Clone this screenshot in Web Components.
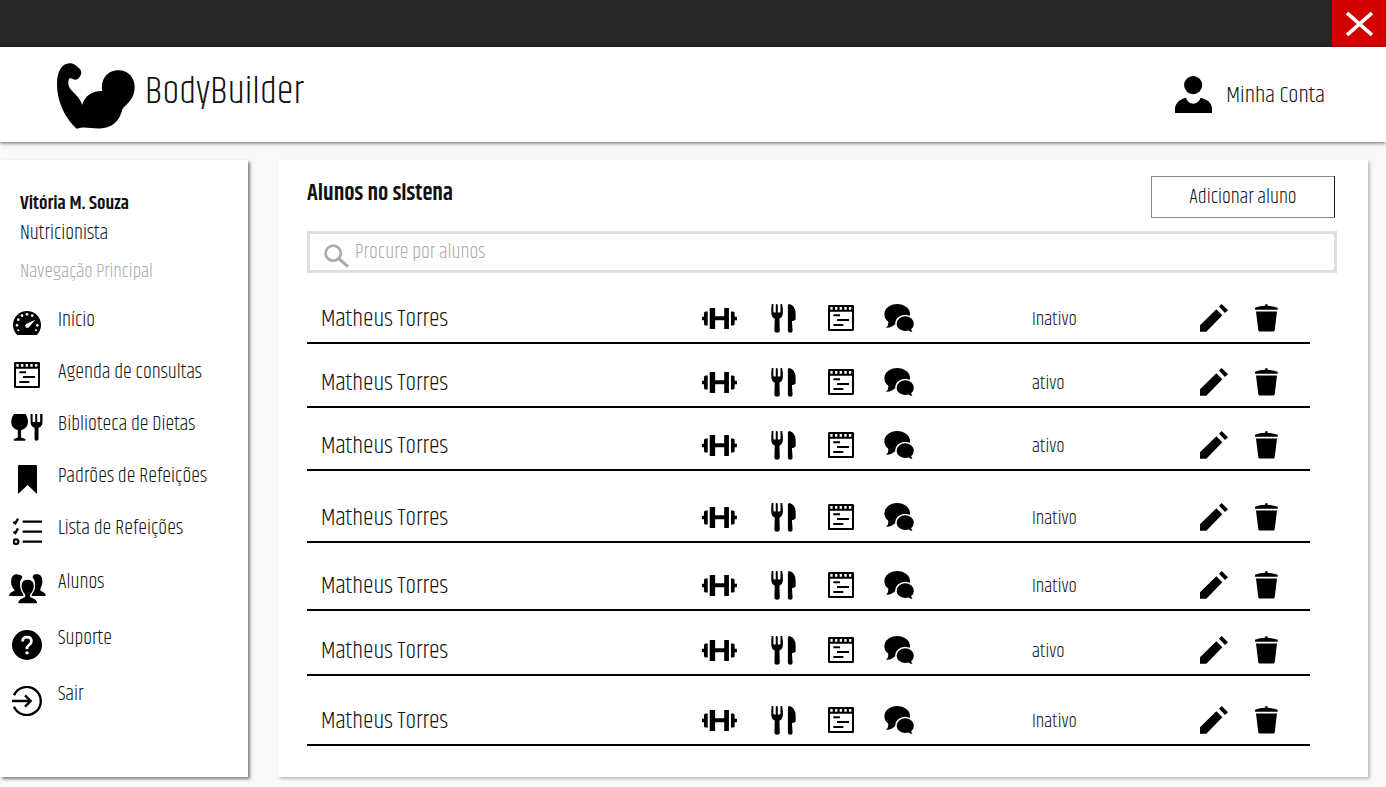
<!DOCTYPE html>
<html lang="pt-BR">
<head>
<meta charset="utf-8">
<meta name="viewport" content="width=device-width, initial-scale=1">
<title>BodyBuilder</title>
<style>
  html { background: #f9f9f9; }
  body {
    margin: 0;
    color: #111;
    font-family: Khand, "Liberation Sans Narrow", "Open Sans Condensed", "Roboto Condensed", "Liberation Sans", sans-serif;
    font-size: 20px;
    font-weight: 300;
    line-height: 24px;
  }
</style>
</head>
<body>
<body-builder-app></body-builder-app>

<script>
const ICONS = {
  close: [27, 24, '0 0 81 72', '<path d="M3 3 78 69M78 3 3 69" fill="none" stroke="currentColor" stroke-width="11"/>'],
  arm: [78, 66, '0 0 236 198', '<path d="M60 198C38 180 0 130 0 62C0 25 15 0 38 0C50 0 55 6 60 9C70 17 76 24 73 32C70 42 64 50 56 50C48 50 44 43 37 46C30 60 36 75 48 86C60 98 72 110 76 126C84 100 105 83 137 84C132 50 150 21 186 21C215 21 235 42 235 72C235 105 215 120 198 138C190 175 165 196 130 197C105 198 90 192 72 195Z"/>'],
  person: [37, 37, '0 0 110 110', '<circle cx="54" cy="27" r="27"/><path d="M0 110V96C2 78 18 68 33 65C38 88 70 88 76 65C95 70 108 78 110 96V110Z"/>'],
  search: [25, 24, '0 0 76 71', '<g fill="none" stroke="currentColor" stroke-width="8"><circle cx="28" cy="27" r="23"/><path d="M46 44 73 68" stroke-width="9"/></g>'],
  dumbbell: [35, 21, '0 0 104 62', '<path d="M0 26H6V15Q6 10 11 10H17V52H11Q6 52 6 47V36H0ZM23 0H39V24H66V0H80V62H66V36H39V62H23ZM86 10H92Q97 10 97 15V26H104V36H97V47Q97 52 92 52H86Z"/>'],
  cutlery: [25, 29, '0 0 74 86', '<path d="M2 0H7V22Q7 25 10 25H14V3Q14 0 17 0T20 3V25H25Q28 25 28 22V0H33Q36 12 35 30Q34 40 25 44L26 80Q26 85 18 85T10 80L11 44Q2 40 1 30Q0 12 2 0ZM50 5Q50 0 55 0Q73 6 73 28V44Q73 50 62 51L64 79Q64 85 57 85T50 79Z"/>'],
  calendar: [26, 26, '0 0 78 78', '<path fill-rule="evenodd" d="M4 0H74Q78 0 78 4V74Q78 78 74 78H4Q0 78 0 74V4Q0 0 4 0ZM6 20V72H72V20ZM7 6V14H14V6ZM21 6V14H28V6ZM35 6V14H42V6ZM49 6V14H56V6ZM63 6V14H70V6Z"/><path d="M16 31H36M27 45H63M16 60H46" fill="none" stroke="currentColor" stroke-width="6"/>'],
  chat: [31, 29, '0 0 92 88', '<ellipse cx="39" cy="31" rx="39" ry="31"/><path d="M12 48Q14 66 5 72Q22 74 36 58Z"/><path d="M63 35C79 35 92 46 92 60C92 67 89 73 84 77Q86 84 92 87Q82 89 73 83C51 88 35 75 35 60C35 46 48 35 63 35Z" stroke="#fff" stroke-width="5"/>'],
  pencil: [28, 28, '0 0 84 84', '<path d="M0 64 49 16 67 34 19 83H0ZM57 8 65 0 84 19 75 27Z"/>'],
  trash: [23, 28, '0 0 70 84', '<path d="M0 17V11Q14 5 31 5V0H38V5Q56 5 69 11V17ZM3 22H67L60 79Q59 83 56 83H14Q11 83 10 79Z"/>'],
  gauge: [28, 24, '0 0 84 72', '<path d="M13 72C5 65 0 54 0 42C0 18 19 0 42 0S84 18 84 42C84 54 79 65 71 72Z"/><g fill="#fff"><circle cx="12" cy="43" r="4"/><circle cx="16" cy="26" r="4"/><circle cx="27" cy="14" r="4"/><circle cx="42" cy="10" r="4"/><circle cx="58" cy="14" r="4"/><circle cx="73" cy="43" r="4"/><circle cx="16" cy="58" r="3"/><circle cx="69" cy="58" r="3"/><path d="M67 26 49 47Q45 52 39 50Q34 44 39 39Z"/></g>'],
  diet: [32, 27, '0 0 96 82', '<path d="M8 0H44C54 18 56 42 30 49V71L43 76V81H8V76L20 71V49C-4 42-4 18 8 0ZM59 0H65V24H73V0H79V24H88V0H95V25Q95 38 83 42V76Q83 81 77 81T71 76V42Q59 38 59 25Z"/>'],
  bookmark: [19, 29, '0 0 57 87', '<path d="M4 0H53Q57 0 57 4V87L29 60 0 87V4Q0 0 4 0Z"/>'],
  list: [29, 27, '0 0 87 81', '<g fill="none" stroke="currentColor" stroke-width="7"><path d="M29 11H87M29 41H87M29 71H87"/><path d="M1 12 7 16 15 2M1 41 7 45 15 31"/><circle cx="9" cy="71" r="7"/></g>'],
  people: [37, 30, '0 0 110 90', '<path d="M0 66C0 57 6 54 16 50C18 46 4 42 6 20C7 2 22-2 30 3C36 2 40 6 39 12C31 20 31 31 37 45L43 57V66ZM110 66C110 57 102 54 94 50C92 46 96 40 99 30C102 8 94-2 78 1C72 2 70 6 71 12C79 20 79 31 73 45L67 57V66Z"/><path d="M25 90C25 75 36 73 46 68V62C38 54 32 38 37 26C42 12 68 12 74 26C79 38 73 54 65 62V68C75 73 86 75 86 90Z" stroke="#fff" stroke-width="4"/>'],
  help: [30, 30, '0 0 88 88', '<circle cx="44" cy="44" r="44"/><path d="M31 34Q31 21 44 21T57 33Q57 39 50 44T44 56" fill="none" stroke="#fff" stroke-width="8"/><circle cx="44" cy="67" r="5" fill="#fff"/>'],
  exit: [30, 30, '0 0 90 90', '<g fill="none" stroke="currentColor" stroke-width="7"><path d="M6 28A42 42 0 1 1 6 62M0 45H56M39 28 56 45 39 62"/></g>']
};

class UiIcon extends HTMLElement {
  connectedCallback() {
    const [w, h, box, art] = ICONS[this.getAttribute('name')];
    this.attachShadow({ mode: 'open' }).innerHTML = `
      <style>:host { display: inline-flex; flex: none; } svg { display: block; fill: currentColor; }</style>
      <svg width="${w}" height="${h}" viewBox="${box}" aria-hidden="true">${art}</svg>`;
  }
}
customElements.define('ui-icon', UiIcon);

class TitleBar extends HTMLElement {
  constructor() {
    super();
    this.attachShadow({ mode: 'open' }).innerHTML = `
      <style>
        :host { display: flex; justify-content: flex-end; height: 47px; background: #272727; }
        button { display: grid; place-items: center; width: 54px; padding: 0; border: 0; background: #d20000; color: #fff; }
      </style>
      <button type="button" aria-label="Fechar"><ui-icon name="close"></ui-icon></button>`;
  }
}
customElements.define('title-bar', TitleBar);

class SiteHeader extends HTMLElement {
  constructor() {
    super();
    this.attachShadow({ mode: 'open' }).innerHTML = `
      <style>
        :host { display: block; position: relative; background: #fff; box-shadow: 0 1px 4px rgba(0,0,0,.6); }
        header { display: flex; align-items: center; justify-content: space-between; height: 93px; padding: 2px 61px 0 57px; }
        a { display: flex; align-items: center; color: inherit; text-decoration: none; }
        .brand { gap: 10px; font-size: 38px; line-height: 48px; }
        .brand span { margin-bottom: 8px; }
        .account { gap: 14px; font-size: 23px; line-height: 32px; }
        .account ui-icon { margin-bottom: 3px; }
        ui-icon { color: #000; }
      </style>
      <header>
        <a class="brand" href="#"><ui-icon name="arm"></ui-icon><span>BodyBuilder</span></a>
        <a class="account" href="#"><ui-icon name="person"></ui-icon><span>Minha Conta</span></a>
      </header>`;
  }
}
customElements.define('site-header', SiteHeader);

class NavItem extends HTMLElement {
  constructor() {
    super();
    this.attachShadow({ mode: 'open' }).innerHTML = `
      <style>
        :host { display: block; --row: 52px; --drop: 4px; }
        :host([tall]) { --row: 56px; --drop: 12px; }
        a { display: flex; align-items: center; gap: 13px; height: var(--row); color: inherit; text-decoration: none; }
        .icon { display: grid; place-items: center; width: 36px; margin-top: var(--drop); color: #000; }
      </style>
      <a href="#"><span class="icon"><ui-icon name="${this.getAttribute('icon')}"></ui-icon></span><slot></slot></a>`;
  }
}
customElements.define('nav-item', NavItem);

class SideBar extends HTMLElement {
  constructor() {
    super();
    this.attachShadow({ mode: 'open' }).innerHTML = `
      <style>
        :host { display: block; box-sizing: border-box; width: 248px; padding: 29px 0 31px; background: #fff; box-shadow: 2px 2px 3px rgba(0,0,0,.5); }
        p { margin: 0 20px; line-height: 30px; }
        .name { font-size: 19px; font-weight: 600; }
        .caption { font-size: 19px; line-height: 46px; color: #aaa; }
        nav { padding-left: 9px; }
      </style>
      <p class="name"><slot name="name"></slot></p>
      <p><slot name="role"></slot></p>
      <p class="caption">Navegação Principal</p>
      <nav aria-label="Navegação Principal"><slot></slot></nav>`;
  }
}
customElements.define('side-bar', SideBar);

class SearchBox extends HTMLElement {
  constructor() {
    super();
    this.attachShadow({ mode: 'open' }).innerHTML = `
      <style>
        :host { display: block; }
        label { display: flex; align-items: center; gap: 6px; height: 36px; padding-left: 14px; border: 3px solid #dfdfdf; }
        ui-icon { margin-top: 8px; color: #aaa; }
        input { flex: 1; min-width: 0; height: 36px; padding: 0; margin: 0; border: 0; outline: 0; background: none; font: inherit; color: inherit; }
        input::placeholder { color: #aaa; opacity: 1; }
      </style>
      <label><ui-icon name="search"></ui-icon><input type="search" placeholder="Procure por alunos" aria-label="Procure por alunos"></label>`;
  }
}
customElements.define('search-box', SearchBox);

class StudentTable extends HTMLElement {
  connectedCallback() {
    const actions = [['dumbbell', 'Treinos'], ['cutlery', 'Dieta'], ['calendar', 'Agenda'], ['chat', 'Mensagens']];
    const edits = [['pencil', 'Editar'], ['trash', 'Excluir']];
    const cell = ([icon, label]) => `<td><button type="button" aria-label="${label}"><ui-icon name="${icon}"></ui-icon></button></td>`;
    const students = [
      ['Matheus Torres', 'Inativo', 71], ['Matheus Torres', 'ativo', 64], ['Matheus Torres', 'ativo', 63],
      ['Matheus Torres', 'Inativo', 72], ['Matheus Torres', 'Inativo', 68], ['Matheus Torres', 'ativo', 65],
      ['Matheus Torres', 'Inativo', 70]
    ];
    this.attachShadow({ mode: 'open' }).innerHTML = `
      <style>
        :host { display: block; }
        table { width: 100%; table-layout: fixed; border-collapse: separate; border-spacing: 0; }
        th, td { height: var(--row); box-sizing: border-box; padding: 0 0 6px; border-bottom: 2px solid #000; vertical-align: bottom; text-align: left; font-weight: 300; line-height: 36px; }
        th { padding: 0 0 5px 14px; font-size: 24px; }
        .status { padding-bottom: 4px; font-size: 19px; }
        button { display: grid; place-items: center; width: 36px; height: 36px; padding: 0; border: 0; background: none; color: #000; }
      </style>
      <table aria-label="Alunos">
        <colgroup><col><col style="width:64px"><col style="width:58px"><col style="width:58px"><col style="width:151px"><col style="width:164px"><col style="width:52px"><col style="width:62px"></colgroup>
        <tbody>${students.map(([name, status, row]) => `
          <tr style="--row:${row}px"><th scope="row">${name}</th>${actions.map(cell).join('')}<td class="status">${status}</td>${edits.map(cell).join('')}</tr>`).join('')}
        </tbody>
      </table>`;
  }
}
customElements.define('student-table', StudentTable);

class StudentPanel extends HTMLElement {
  constructor() {
    super();
    this.attachShadow({ mode: 'open' }).innerHTML = `
      <style>
        :host { display: block; padding: 16px 31px 31px 29px; background: #fff; box-shadow: 2px 2px 3px rgba(0,0,0,.25); }
        .head { display: flex; justify-content: space-between; align-items: flex-start; margin: 0 2px 13px 0; }
        h1 { margin: 0; font-size: 23px; line-height: 36px; font-weight: 600; }
        button { width: 184px; height: 42px; padding: 2px 0 0; border: 1px solid #888; border-right-color: #161616; background: #fff; color: inherit; font: inherit; }
        student-table { margin-right: 27px; }
      </style>
      <div class="head"><h1><slot></slot></h1><button type="button">Adicionar aluno</button></div>
      <search-box></search-box>
      <student-table></student-table>`;
  }
}
customElements.define('student-panel', StudentPanel);

class BodyBuilderApp extends HTMLElement {
  constructor() {
    super();
    this.attachShadow({ mode: 'open' }).innerHTML = `
      <style>
        :host { display: block; }
        main { display: flex; gap: 30px; padding: 18px 18px 10px 0; }
        side-bar { flex: none; }
        student-panel { flex: 1; min-width: 0; }
      </style>
      <title-bar></title-bar>
      <site-header></site-header>
      <main>
        <side-bar>
          <span slot="name">Vitória M. Souza</span>
          <span slot="role">Nutricionista</span>
          <nav-item icon="gauge">Início</nav-item>
          <nav-item icon="calendar">Agenda de consultas</nav-item>
          <nav-item icon="diet">Biblioteca de Dietas</nav-item>
          <nav-item icon="bookmark">Padrões de Refeições</nav-item>
          <nav-item icon="list">Lista de Refeições</nav-item>
          <nav-item icon="people" tall>Alunos</nav-item>
          <nav-item icon="help" tall>Suporte</nav-item>
          <nav-item icon="exit" tall>Sair</nav-item>
        </side-bar>
        <student-panel>Alunos no sistena</student-panel>
      </main>`;
  }
}
customElements.define('body-builder-app', BodyBuilderApp);
</script>
</body>
</html>
